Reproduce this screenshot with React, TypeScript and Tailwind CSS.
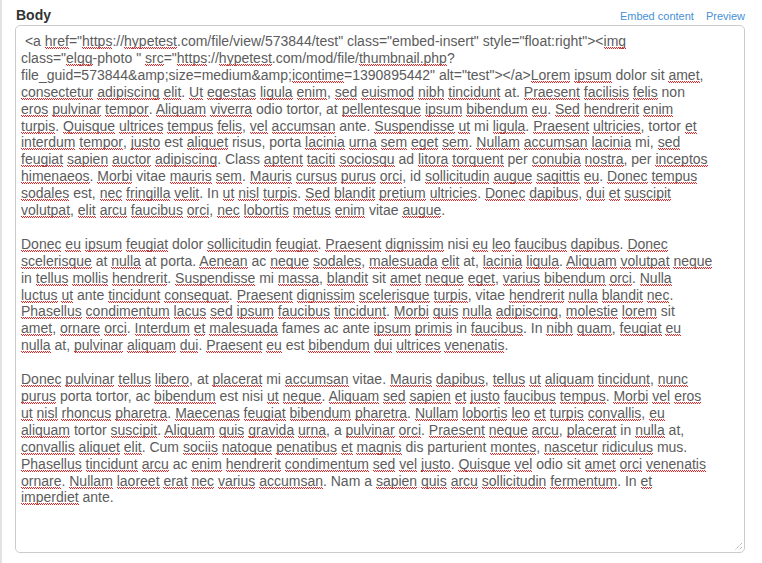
import React from "react";

const LINES = [
  ' <a href="https://hypetest.com/file/view/573844/test" class="embed-insert" style="float:right"><img',
  'class="elgg-photo " src="https://hypetest.com/mod/file/thumbnail.php?',
  'file_guid=573844&amp;size=medium&amp;icontime=1390895442" alt="test"></a>Lorem ipsum dolor sit amet,',
  "consectetur adipiscing elit. Ut egestas ligula enim, sed euismod nibh tincidunt at. Praesent facilisis felis non",
  "eros pulvinar tempor. Aliquam viverra odio tortor, at pellentesque ipsum bibendum eu. Sed hendrerit enim",
  "turpis. Quisque ultrices tempus felis, vel accumsan ante. Suspendisse ut mi ligula. Praesent ultricies, tortor et",
  "interdum tempor, justo est aliquet risus, porta lacinia urna sem eget sem. Nullam accumsan lacinia mi, sed",
  "feugiat sapien auctor adipiscing. Class aptent taciti sociosqu ad litora torquent per conubia nostra, per inceptos",
  "himenaeos. Morbi vitae mauris sem. Mauris cursus purus orci, id sollicitudin augue sagittis eu. Donec tempus",
  "sodales est, nec fringilla velit. In ut nisl turpis. Sed blandit pretium ultricies. Donec dapibus, dui et suscipit",
  "volutpat, elit arcu faucibus orci, nec lobortis metus enim vitae augue.",
  "",
  "Donec eu ipsum feugiat dolor sollicitudin feugiat. Praesent dignissim nisi eu leo faucibus dapibus. Donec",
  "scelerisque at nulla at porta. Aenean ac neque sodales, malesuada elit at, lacinia ligula. Aliquam volutpat neque",
  "in tellus mollis hendrerit. Suspendisse mi massa, blandit sit amet neque eget, varius bibendum orci. Nulla",
  "luctus ut ante tincidunt consequat. Praesent dignissim scelerisque turpis, vitae hendrerit nulla blandit nec.",
  "Phasellus condimentum lacus sed ipsum faucibus tincidunt. Morbi quis nulla adipiscing, molestie lorem sit",
  "amet, ornare orci. Interdum et malesuada fames ac ante ipsum primis in faucibus. In nibh quam, feugiat eu",
  "nulla at, pulvinar aliquam dui. Praesent eu est bibendum dui ultrices venenatis.",
  "",
  "Donec pulvinar tellus libero, at placerat mi accumsan vitae. Mauris dapibus, tellus ut aliquam tincidunt, nunc",
  "purus porta tortor, ac bibendum est nisi ut neque. Aliquam sed sapien et justo faucibus tempus. Morbi vel eros",
  "ut nisl rhoncus pharetra. Maecenas feugiat bibendum pharetra. Nullam lobortis leo et turpis convallis, eu",
  "aliquam tortor suscipit. Aliquam quis gravida urna, a pulvinar orci. Praesent neque arcu, placerat in nulla at,",
  "convallis aliquet elit. Cum sociis natoque penatibus et magnis dis parturient montes, nascetur ridiculus mus.",
  "Phasellus tincidunt arcu ac enim hendrerit condimentum sed vel justo. Quisque vel odio sit amet orci venenatis",
  "ornare. Nullam laoreet erat nec varius accumsan. Nam a sapien quis arcu sollicitudin fermentum. In et",
  "imperdiet ante.",
];

// words the spellchecker accepts
const KNOWN = new Set([
  "a", "com", "file", "view", "test", "class", "embed", "insert", "style", "float", "right",
  "photo", "mod", "guid", "amp", "size", "medium", "alt",
  "dolor", "sit", "non", "at", "odio", "tortor", "ante", "mi", "est", "risus", "porta", "ad",
  "per", "vitae", "id", "in", "ac", "nisi", "cum", "dis", "parturient", "nam", "fames", "mus",
]);

function Line({ text }: { text: string }) {
  if (!text) return <div className="h-[16.9px]" />;
  const parts = text.split(/([A-Za-z]+(?:\.php)?)/);
  return (
    <div className="whitespace-pre">
      {parts.map((p, i) =>
        i % 2 === 1 && !KNOWN.has(p.toLowerCase()) ? (
          <span
            key={i}
            className="relative after:absolute after:bottom-0 after:left-0 after:right-0 after:h-[2px] after:bg-[linear-gradient(90deg,#e52222_50%,transparent_50%),linear-gradient(90deg,transparent_50%,#e52222_50%)] after:bg-[length:2px_1px] after:bg-[position:0_0,0_1px] after:bg-repeat-x after:content-['']"
          >
            {p}
          </span>
        ) : (
          <React.Fragment key={i}>{p}</React.Fragment>
        ),
      )}
    </div>
  );
}

export default function App() {
  return (
    <div
      className="flex h-[563px] w-[762px] flex-col border-l-2 border-[#e2e2e2] bg-white pb-[10px] pl-[13px] pr-[17px]"
      style={{ fontFamily: '"Liberation Sans", Arial, sans-serif' }}
    >
      <div className="flex items-baseline justify-between pb-[2px] pl-px pt-[7px]">
        <label className="text-[14px] font-bold leading-4 text-[#333]">Body</label>
        <div className="flex gap-3 text-[11px] leading-[13px] text-[#4690d6]">
          <a className="cursor-pointer">Embed content</a>
          <a className="cursor-pointer">Preview</a>
        </div>
      </div>

      <div className="relative flex-1 overflow-hidden rounded-[5px] border border-[#cccccc] bg-white px-[5px] pt-[7px] text-[14px] leading-[16.9px] text-[#5c5c5c]">
        {LINES.map((l, i) => (
          <Line key={i} text={l} />
        ))}
        <svg
          className="absolute bottom-[1px] right-[1px]"
          width="9"
          height="9"
          viewBox="0 0 9 9"
        >
          <path d="M8 1 L1 8 M8 5 L5 8" stroke="#9a9a9a" strokeWidth="1" strokeDasharray="1 1" />
        </svg>
      </div>
    </div>
  );
}
